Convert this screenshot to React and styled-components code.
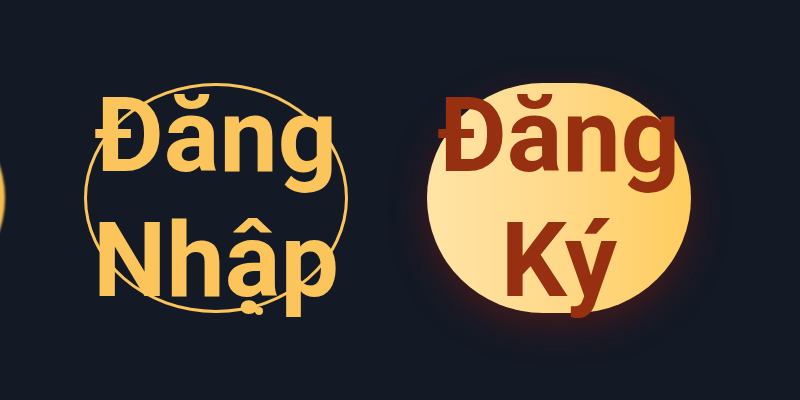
import React from "react";
import styled, { createGlobalStyle } from "styled-components";

const GlobalStyle = createGlobalStyle`
  html, body {
    margin: 0;
    padding: 0;
    background: #141926;
    overflow: hidden;
  }
`;

const Bar = styled.div`
  display: flex;
  align-items: center;
  gap: 79px;
  height: 400px;
  margin-left: -259px;
  font-family: Roboto, "Noto Sans", sans-serif;
`;

const Round = styled.button`
  position: relative;
  flex: 0 0 auto;
  width: 264px;
  height: 230px;
  margin-top: -4px;
  border-radius: 50%;
  display: flex;
  align-items: center;
  justify-content: center;
  padding: 0;
  font-family: inherit;
  font-size: 104px;
  font-weight: 700;
  line-height: 125px;
  text-align: center;
  cursor: pointer;
`;

const Ghost = styled(Round)`
  background: transparent;
  border: 3px solid #fcc55b;
  color: #fcc55b;

  &::after {
    content: "";
    position: absolute;
    left: 168px;
    bottom: -5px;
    width: 8px;
    height: 8px;
    border-radius: 50%;
    background: #fcc55b;
  }
`;

const Filled = styled(Round)`
  border: none;
  border-radius: 44% / 50%;
  color: #963010;
  background: linear-gradient(90deg, #ffe4a6 0%, #ffd98a 50%, #ffcc5e 100%);
  box-shadow: 0 12px 34px rgba(110, 28, 18, 0.55);
`;

const Edge = styled(Round)`
  border: none;
  background: #f3c04f;
  filter: blur(1px);
`;

const Label = styled.span`
  display: block;
  white-space: normal;
`;

export default function App() {
  return (
    <>
      <GlobalStyle />
      <Bar>
        <Edge aria-hidden="true" />
        <Ghost>
          <Label>Đăng Nhập</Label>
        </Ghost>
        <Filled>
          <Label>Đăng Ký</Label>
        </Filled>
      </Bar>
    </>
  );
}
